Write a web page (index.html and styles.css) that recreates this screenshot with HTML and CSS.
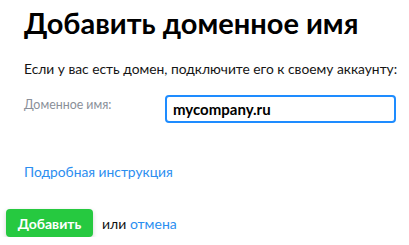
FILE: index.html
```html
<!DOCTYPE html>
<html lang="ru">
<head>
<meta charset="utf-8">
<link rel="stylesheet" href="styles.css">
</head>
<body>
<div class="page">
  <h1 class="title">Добавить доменное имя</h1>
  <p class="intro">Если у вас есть домен, подключите его к своему аккаунту:</p>
  <div class="field">
    <label class="field-label">Доменное имя:</label>
    <div class="field-input">mycompany.ru</div>
  </div>
  <a class="help-link">Подробная инструкция</a>
  <div class="actions">
    <button class="btn-add">Добавить</button>
    <span class="or">или <a class="cancel">отмена</a></span>
  </div>
</div>
</body>
</html>
```

FILE: styles.css
```css
html, body {
  margin: 0;
  padding: 0;
  background: #fff;
}
.page {
  font-family: "Lato", "Noto Sans", sans-serif;
  color: #151515;
  padding: 6px 0 0 24px;
  display: flex;
  flex-direction: column;
}
.title {
  margin: 0;
  font-size: 29px;
  line-height: 34px;
  font-weight: 700;
  color: #000;
  white-space: nowrap;
}
.intro {
  margin: 19px 0 0;
  font-size: 13.8px;
  line-height: 20px;
  white-space: nowrap;
}
.field {
  display: flex;
  align-items: flex-start;
  margin-top: 16px;
}
.field-label {
  width: 141px;
  margin-top: 2px;
  font-size: 12.4px;
  line-height: 16px;
  color: #8a8f99;
}
.field-input {
  box-sizing: border-box;
  width: 231px;
  height: 28px;
  border: 2px solid #1e8cff;
  border-radius: 4px;
  padding: 0 6px;
  font-size: 15px;
  font-weight: 700;
  line-height: 24px;
  color: #000;
}
.help-link {
  margin-top: 39px;
  font-size: 13.8px;
  line-height: 20px;
  color: #2b8ef0;
  align-self: flex-start;
}
.actions {
  display: flex;
  align-items: center;
  margin: 27px 0 0 -18px;
}
.btn-add {
  font-family: inherit;
  width: 87px;
  height: 28px;
  border: none;
  border-radius: 4px;
  background: #26c940;
  color: #fff;
  font-size: 14px;
  font-weight: 700;
  padding: 0;
  box-shadow: 0 2px 5px rgba(0,0,0,0.18);
}
.or {
  margin-left: 9px;
  font-size: 14px;
  color: #111;
}
.cancel {
  color: #2b8ef0;
}
```
